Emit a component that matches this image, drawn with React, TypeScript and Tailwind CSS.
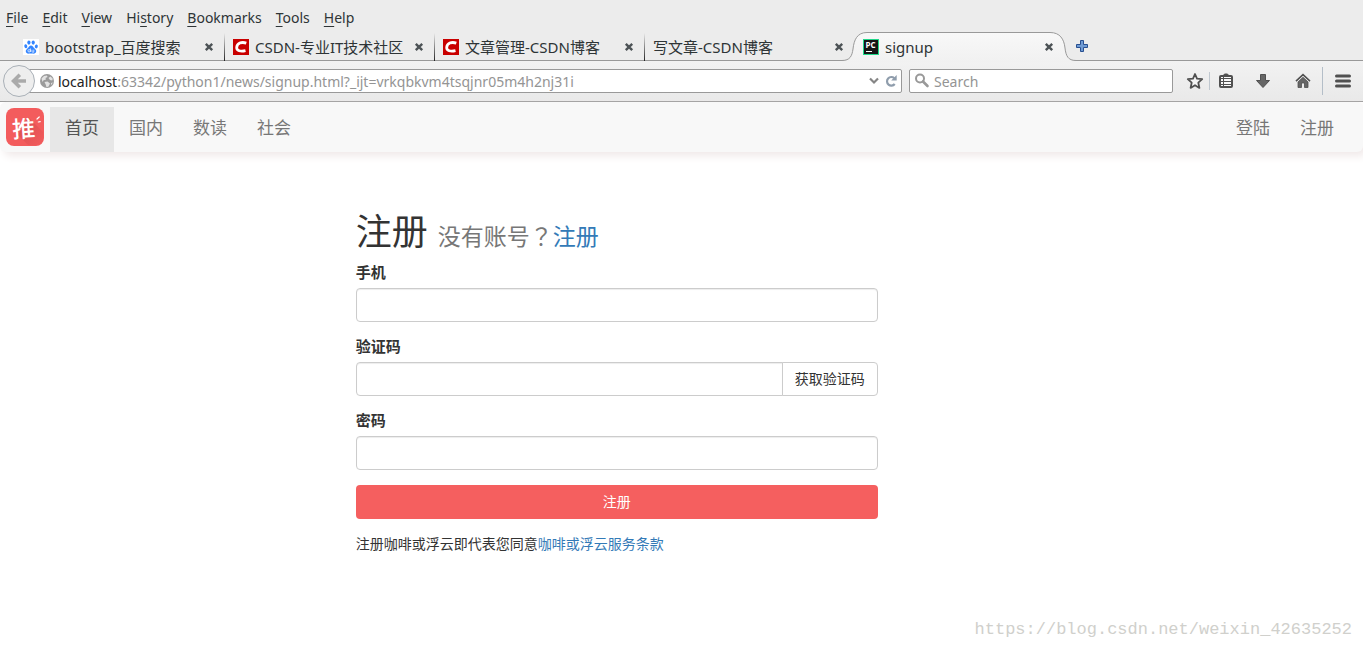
import React from "react";

const ui = "font-['Noto_Sans','Noto_Sans_CJK_SC',sans-serif]";

function BaiduIcon() {
  return (
    <svg viewBox="0 0 16 16" className="size-4 shrink-0" aria-hidden="true">
      <rect width="16" height="16" fill="#fff" />
      <g fill="#3385ff">
        <ellipse cx="5.9" cy="3.6" rx="1.6" ry="2.1" />
        <ellipse cx="10.2" cy="3.6" rx="1.6" ry="2.1" />
        <ellipse cx="2.8" cy="7.2" rx="1.5" ry="2" transform="rotate(-12 2.8 7.2)" />
        <ellipse cx="13.3" cy="7.4" rx="1.5" ry="2" transform="rotate(12 13.3 7.4)" />
        <path d="M8 6.6c1.5 0 2 1.3 3 2.3 1.200 1.100 2.500 2 2.200 3.700-.3 1.900-2 2.200-3.400 2-1.200-.2-2.400-.2-3.600 0-1.500.2-3.100-.1-3.400-2C2.500 11 3.800 10 5 8.900c1-1 1.500-2.300 3-2.300z" />
      </g>
      <g fill="none" stroke="#fff" strokeWidth="0.7">
        <circle cx="6.100" cy="11.800" r="1.200" />
        <path d="M7.500 9.500v3.500M9 10.700v2q0 .5.6.5h1.200v-2.600" />
      </g>
    </svg>
  );
}

function CsdnIcon() {
  return (
    <svg viewBox="0 0 16 16" className="size-4 shrink-0" aria-hidden="true">
      <rect width="16" height="16" fill="#c90000" />
      <path d="M13.300 4.100C8.500 2.500 4 4.200 3.700 8.300c-.2 3.500 3.800 4.600 8.800 3.400" fill="none" stroke="#fff" strokeWidth="2.800" />
    </svg>
  );
}

function PyCharmIcon() {
  return (
    <svg viewBox="0 0 16 16" className="size-4 shrink-0" aria-hidden="true">
      <rect width="16" height="16" fill="#21d789" />
      <rect x="1" y="1" width="14" height="14" fill="#151515" />
      <text x="2.500" y="8.800" fontSize="8" fontWeight="700" fill="#fff" fontFamily="Open Sans, sans-serif">PC</text>
      <rect x="3" y="12" width="6" height="1" fill="#fff" />
    </svg>
  );
}

function CloseIcon() {
  return (
    <svg viewBox="0 0 10 10" className="size-[10px]" aria-hidden="true">
      <path d="M1.800 1.800l6.400 6.400M8.200 1.800L1.800 8.200" stroke="#4d5356" strokeWidth="2.400" />
    </svg>
  );
}

function GlobeIcon() {
  return (
    <svg viewBox="0 0 16 16" className="size-4 shrink-0" aria-hidden="true">
      <circle cx="8" cy="8" r="7" fill="#9b9b9b" />
      <path d="M2.500 5.500L5 3l3-.5.5 1.500-2 1 .5 1.500-2.500.8L3.500 9zM9.500 5l2-1.500 2.300 2.300-.6 1.700-2.200-.6zM5.500 9l3-.5 2.500 2-1.500 3-2 .8-.7-2.600zM12 10l1.800-.5-1.500 2.800z" fill="#e2e2e2" />
    </svg>
  );
}

function SiteLogo() {
  return (
    <svg viewBox="0 0 38 38" className="size-[38px]" role="img" aria-label="推">
      <defs>
        <linearGradient id="logoShade" x1="0" y1="0" x2="1" y2="1">
          <stop offset="0" stopColor="#d94c4e" />
          <stop offset="1" stopColor="#f25c5d" />
        </linearGradient>
      </defs>
      <rect width="38" height="38" rx="8" fill="#f35c5d" />
      <path d="M22 9L37 24V32q-2 5-7 5H22L12 27z" fill="url(#logoShade)" />
      <text x="6" y="29" fontSize="23" fontWeight="500" fill="#fff" fontFamily="Noto Sans CJK SC, sans-serif" transform="rotate(-4 19 19)">推</text>
      <path d="M31 11l2.200-2M32.300 14l1.900-.3" stroke="#fff" strokeWidth="1.200" strokeLinecap="round" />
    </svg>
  );
}

const menus: [string, string, string][] = [
  ["", "F", "ile"],
  ["", "E", "dit"],
  ["", "V", "iew"],
  ["Hi", "s", "tory"],
  ["", "B", "ookmarks"],
  ["", "T", "ools"],
  ["", "H", "elp"],
];

function MenuBar() {
  return (
    <div className="flex h-8 items-center gap-[14px] px-[6px] pt-1">
      {menus.map(([pre, key, post]) => (
        <button key={key + post} type="button" className="text-sm leading-5">
          {pre}
          <span className="underline underline-offset-3">{key}</span>
          {post}
        </button>
      ))}
    </div>
  );
}

function Tab({ title, icon, active, divider }: { title: string; icon?: React.ReactNode; active?: boolean; divider?: boolean }) {
  return (
    <div className="relative flex w-[210px] min-w-0 items-center pt-px pr-[10px] pl-[9px]">
      {active && (
        <svg viewBox="0 0 234 30" className="absolute -left-3 top-0 h-[30px] w-[234px]" aria-hidden="true">
          <defs>
            <linearGradient id="tabFill" x1="0" y1="0" x2="0" y2="1">
              <stop offset="0" stopColor="#f8f8f8" />
              <stop offset="1" stopColor="#f1f1f1" />
            </linearGradient>
          </defs>
          <path d="M0 30V28.500C8 28.500 10 24 11 17C12 8 15 .5 25 .5H208C218 .5 222 7 223 16C224 24 226 28.500 234 28.500V30z" fill="url(#tabFill)" />
          <path d="M0 28.500C8 28.500 10 24 11 17C12 8 15 .5 25 .5H208C218 .5 222 7 223 16C224 24 226 28.500 234 28.500" fill="none" stroke="#999" />
        </svg>
      )}
      <button type="button" role="tab" aria-selected={!!active} className="relative flex min-w-0 flex-1 items-center gap-[6px] text-left text-[15px] leading-5 whitespace-nowrap">
        {icon}
        <span className="truncate">{title}</span>
      </button>
      <button type="button" aria-label={`Close ${title}`} className="relative shrink-0">
        <CloseIcon />
      </button>
      {divider && <span className="absolute -right-px bottom-0 h-7 w-px bg-gradient-to-b from-transparent to-[#222]" />}
    </div>
  );
}

function TabStrip() {
  return (
    <div className="flex h-[29px] border-b border-[#999] pl-[14px]">
      <div role="tablist" className="-mb-px flex h-[29px]">
        <Tab title="bootstrap_百度搜索" icon={<BaiduIcon />} divider />
        <Tab title="CSDN-专业IT技术社区" icon={<CsdnIcon />} divider />
        <Tab title="文章管理-CSDN博客" icon={<CsdnIcon />} divider />
        <Tab title="写文章-CSDN博客" />
        <Tab title="signup" icon={<PyCharmIcon />} active />
      </div>
      <button type="button" aria-label="New tab" className="ml-3">
        <svg viewBox="0 0 12 12" className="size-3" aria-hidden="true">
          <path d="M4.500.5h3v4h4v3h-4v4h-3v-4h-4v-3h4z" fill="#6f9bd4" stroke="#274f90" strokeLinejoin="round" />
        </svg>
      </button>
    </div>
  );
}

const toolButton = "flex h-full shrink-0 items-center justify-center";

function Toolbar() {
  return (
    <div className="flex h-[41px] items-center border-b border-[#999] bg-gradient-to-b from-[#f2f2f2] to-[#e9e9e9] pl-[3px]">
      <button type="button" aria-label="Back" className="z-10 flex size-8 shrink-0 items-center justify-center rounded-full border border-[#a9b0b7] bg-[#eee]">
        <svg viewBox="0 0 16 16" className="size-4" aria-hidden="true">
          <path d="M8.800 1.800L2.500 8l6.300 6.200M3 8h12" fill="none" stroke="#aaa" strokeWidth="3.600" />
        </svg>
      </button>
      <div className="-ml-2 flex h-6 min-w-0 flex-1 items-center rounded-r-xs border border-[#999] bg-white pr-1 pl-[11px]">
        <GlobeIcon />
        <div className="ml-[3px] min-w-0 flex-1 truncate pt-[2px] text-sm leading-5 text-[#949494]">
          <span className="text-[#222]">localhost</span>:63342/python1/news/signup.html?_ijt=vrkqbkvm4tsqjnr05m4h2nj31i
        </div>
        <button type="button" aria-label="Show history" className="shrink-0">
          <svg viewBox="0 0 10 8" className="h-2 w-[10px]" aria-hidden="true">
            <path d="M1 1.500L5 5.500L9 1.500" fill="none" stroke="#858585" strokeWidth="2.200" />
          </svg>
        </button>
        <button type="button" aria-label="Reload" className="ml-[6px] shrink-0">
          <svg viewBox="0 0 12 12" className="size-3" aria-hidden="true">
            <path d="M9.300 3.200A4.300 4.300 0 1 0 9.700 9" fill="none" stroke="#8f9dac" strokeWidth="2.200" />
            <path d="M11.700 0v5.500H6.200z" fill="#8f9dac" />
          </svg>
        </button>
      </div>
      <label className="ml-[7px] flex h-6 w-[264px] shrink-0 items-center gap-1 rounded-xs border border-[#999] bg-white px-1">
        <svg viewBox="0 0 16 16" className="size-4 shrink-0" aria-hidden="true">
          <circle cx="6" cy="5.500" r="4" fill="none" stroke="#999" strokeWidth="2" />
          <path d="M9 8.500l4.500 4.500" stroke="#999" strokeWidth="2.600" strokeLinecap="round" />
        </svg>
        <input type="search" aria-label="Search" placeholder="Search" className="min-w-0 flex-1 pt-[2px] text-sm leading-5 outline-none placeholder:text-[#949494]" />
      </label>
      <button type="button" aria-label="Bookmark this page" className={`${toolButton} ml-2 w-7`}>
        <svg viewBox="0 0 18 18" className="size-[18px]" aria-hidden="true">
          <path d="M9 2l2 4.700 5.200.5-3.900 3.500 1.100 5.200L9 13.200l-4.400 2.700 1.100-5.200L1.800 7.200 7 6.700z" fill="#f5f5f5" stroke="#505050" strokeWidth="1.800" strokeLinejoin="round" />
        </svg>
      </button>
      <span className="h-[18px] w-px shrink-0 bg-[#c0c8d0]" />
      <button type="button" aria-label="Show bookmarks" className={`${toolButton} w-8`}>
        <svg viewBox="0 0 16 16" className="size-4" aria-hidden="true">
          <path d="M5 3L6.500 1h3L11 3z" fill="#505050" stroke="#505050" />
          <rect x="2" y="3" width="12" height="11" rx="1" fill="#f8f8f8" stroke="#505050" strokeWidth="2" />
          <path d="M3 5.500h10M3 8.500h10M3 11.500h10M5.500 4v10" stroke="#505050" />
        </svg>
      </button>
      <button type="button" aria-label="Downloads" className={`${toolButton} w-[42px]`}>
        <svg viewBox="0 0 16 16" className="size-4" aria-hidden="true">
          <path d="M5.500 1.500h5v6h4L8 14.500 1.500 7.500h4z" fill="#666" stroke="#505050" strokeLinejoin="round" />
        </svg>
      </button>
      <button type="button" aria-label="Home" className={`${toolButton} w-[38px]`}>
        <svg viewBox="0 0 16 16" className="size-4" aria-hidden="true">
          <path d="M1 8.200l7-6.500 7 6.500" fill="none" stroke="#505050" strokeWidth="1.600" />
          <path d="M3 9l5-4.700L13 9v5.500H9.500V10h-3v4.500H3z" fill="#666" stroke="#505050" strokeWidth="0.800" />
        </svg>
      </button>
      <span className="h-7 w-px shrink-0 bg-[#b4bec8]" />
      <button type="button" aria-label="Open menu" className={`${toolButton} w-10`}>
        <svg viewBox="0 0 16 14" className="h-[14px] w-4" aria-hidden="true">
          <path d="M1.500 2h13M1.500 7h13M1.500 12h13" stroke="#505050" strokeWidth="3" strokeLinecap="round" />
        </svg>
      </button>
    </div>
  );
}

const navLink = "flex h-[45px] items-center px-[15px] pb-[2px] text-[17px] leading-6";

function SiteNav() {
  return (
    <nav className="flex h-[50px] items-end rounded-md bg-[#f8f8f8] pr-[14px] shadow-[4px_4px_8px_#f0e9e9]">
      <a href="#" className="mx-[6px] mb-[6px] shrink-0">
        <SiteLogo />
      </a>
      <a href="#" aria-current="page" className={`${navLink} bg-[#e7e7e7] text-[#555]`}>首页</a>
      <a href="#" className={`${navLink} text-[#777]`}>国内</a>
      <a href="#" className={`${navLink} text-[#777]`}>数读</a>
      <a href="#" className={`${navLink} text-[#777]`}>社会</a>
      <a href="#" className={`${navLink} ml-auto text-[#777]`}>登陆</a>
      <a href="#" className={`${navLink} text-[#777]`}>注册</a>
    </nav>
  );
}

const field = "h-[34px] min-w-0 border border-[#ccc] bg-white px-3 text-sm shadow-[inset_0_1px_1px_rgba(0,0,0,0.075)] outline-none focus:border-[#66afe9]";
const fieldLabel = "mb-[5px] block text-[15px] leading-5 font-bold";

function SignupForm() {
  return (
    <form className="ml-[25%] w-[40.5%] px-[15px] pt-[61px] text-sm leading-5 text-[#333]" onSubmit={(e) => e.preventDefault()}>
      <h1 className="mb-[10px] flex items-baseline gap-[10px] text-4xl leading-10 whitespace-nowrap">
        注册
        <small className="text-[23px] leading-6 text-[#777]">
          没有账号<span className="font-['Noto_Sans_CJK_TC',sans-serif]">？</span>
          <a href="#" className="text-[#337ab7]">注册</a>
        </small>
      </h1>
      <div className="mb-[15px]">
        <label htmlFor="phone" className={fieldLabel}>手机</label>
        <input id="phone" type="tel" className={`${field} block w-full rounded-sm`} />
      </div>
      <div className="mb-[15px]">
        <label htmlFor="code" className={fieldLabel}>验证码</label>
        <div className="flex">
          <input id="code" type="text" className={`${field} flex-1 rounded-l-sm`} />
          <button type="button" className="-ml-px h-[34px] shrink-0 rounded-r-sm border border-[#ccc] bg-white px-3">获取验证码</button>
        </div>
      </div>
      <div className="mb-[15px]">
        <label htmlFor="password" className={fieldLabel}>密码</label>
        <input id="password" type="password" className={`${field} block w-full rounded-sm`} />
      </div>
      <button type="submit" className="mb-[15px] block h-[34px] w-full rounded-sm bg-[#f55f5f] text-white">注册</button>
      <p>
        注册咖啡或浮云即代表您同意<a href="#" className="text-[#337ab7]">咖啡或浮云服务条款</a>
      </p>
    </form>
  );
}

export default function App() {
  return (
    <div className="flex min-h-screen flex-col bg-white font-['Liberation_Sans','Noto_Sans_CJK_SC',sans-serif]">
      <header className={`${ui} bg-[#ececec] text-[#2e3436]`}>
        <MenuBar />
        <TabStrip />
        <Toolbar />
      </header>
      <SiteNav />
      <main className="flex-1">
        <SignupForm />
      </main>
      <footer className="px-[11px] pb-2 text-right font-['Liberation_Mono',monospace] text-[17px] leading-6 text-[#d0d0cc]">
        https://blog.csdn.net/weixin_42635252
      </footer>
    </div>
  );
}
